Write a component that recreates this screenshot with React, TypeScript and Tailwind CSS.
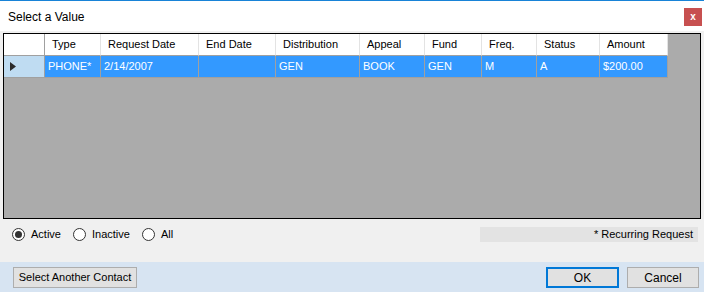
import React from 'react';

const cols = [
  { label: 'Type', w: 'w-[56px]', value: 'PHONE*' },
  { label: 'Request Date', w: 'w-[98px]', value: '2/14/2007' },
  { label: 'End Date', w: 'w-[77px]', value: '' },
  { label: 'Distribution', w: 'w-[84px]', value: 'GEN' },
  { label: 'Appeal', w: 'w-[65px]', value: 'BOOK' },
  { label: 'Fund', w: 'w-[57px]', value: 'GEN' },
  { label: 'Freq.', w: 'w-[55px]', value: 'M' },
  { label: 'Status', w: 'w-[63px]', value: 'A' },
  { label: 'Amount', w: 'w-[68px]', value: '$200.00' },
];

function Radio({ label, checked }: { label: string; checked?: boolean }) {
  return (
    <label className="flex items-center gap-[6px]">
      <span className="w-[13px] h-[13px] rounded-full border border-[#333] bg-white flex items-center justify-center">
        {checked && <span className="w-[7px] h-[7px] rounded-full bg-[#333]" />}
      </span>
      <span>{label}</span>
    </label>
  );
}

export default function App() {
  return (
    <div className="w-[704px] h-[292px] flex flex-col bg-[#f0f0f0] text-[11px] text-black font-['Liberation_Sans',Arial,sans-serif] overflow-hidden">
      <div className="h-px bg-[#1883d7]" />
      <div className="h-[30px] bg-white flex items-start justify-between pl-[8px] pr-[2px]">
        <span className="text-[12px] mt-[7px]">Select a Value</span>
        <button className="mt-[7px] w-[18px] h-[18px] bg-[#c75050] text-white text-[10px] font-bold leading-none flex items-center justify-center">
          x
        </button>
      </div>

      <div className="mx-[3px] mt-[2px] h-[186px] border border-black bg-[#ababab]">
        <div className="flex h-[22px]">
          <div className="w-[41px] bg-white border-r border-b border-[#a0a0a0]" />
          {cols.map((c) => (
            <div
              key={c.label}
              className={`${c.w} bg-white border-r border-b border-[#e3e3e3] border-b-[#a0a0a0] pl-[7px] flex items-center`}
            >
              {c.label}
            </div>
          ))}
        </div>
        <div className="flex h-[22px]">
          <div className="w-[41px] bg-[#bfdcf2] border-r border-b border-[#a0a0a0] flex items-center pl-[6px]">
            <svg width="6" height="9" viewBox="0 0 6 9">
              <path d="M0 0 L6 4.5 L0 9 Z" fill="#2b2b2b" />
            </svg>
          </div>
          {cols.map((c) => (
            <div
              key={c.label}
              className={`${c.w} bg-[#3399ff] text-white border-r border-b border-[#a0a0a0] pl-[3px] flex items-center`}
            >
              {c.value}
            </div>
          ))}
        </div>
      </div>

      <div className="h-[43px] flex items-start justify-between pl-[12px] pr-[6px] pt-[7px]">
        <div className="flex items-center gap-[12px]">
          <Radio label="Active" checked />
          <Radio label="Inactive" />
          <Radio label="All" />
        </div>
        <div className="w-[218px] h-[15px] mt-[1px] bg-[#e3e3e3] flex items-center justify-end pr-[5px]">
          * Recurring Request
        </div>
      </div>

      <div className="flex-1 bg-[#d7e4f2] flex items-start justify-between pl-[13px] pr-[5px] pt-[5px]">
        <button className="w-[124px] h-[21px] bg-[#e1e1e1] border border-[#adadad] text-[11px] whitespace-nowrap flex items-center justify-center">
          Select Another Contact
        </button>
        <div className="flex gap-[8px]">
          <button className="w-[73px] h-[21px] bg-[#e1e1e1] border-2 border-[#0078d7] text-[12px] flex items-center justify-center">
            OK
          </button>
          <button className="w-[72px] h-[21px] bg-[#e1e1e1] border border-[#adadad] text-[12px] flex items-center justify-center">
            Cancel
          </button>
        </div>
      </div>
    </div>
  );
}
